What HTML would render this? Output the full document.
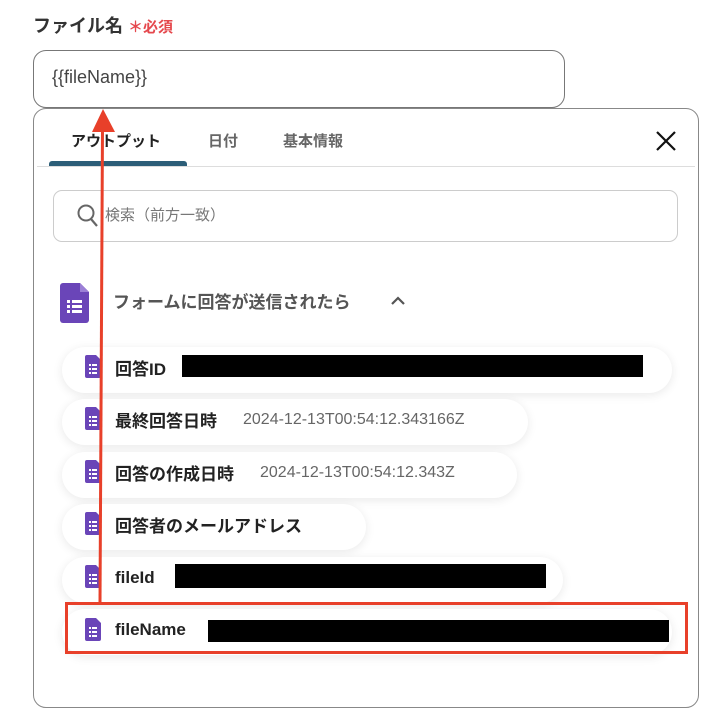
<!DOCTYPE html>
<html><head><meta charset="utf-8"><style>
*{box-sizing:border-box;margin:0;padding:0}
body{width:704px;height:662px;overflow:hidden;background:#fff;font-family:"Liberation Sans","Noto Sans CJK JP",sans-serif;position:relative;color:#222}
.abs{position:absolute}
.lbl{left:33px;top:12px;font-size:18px;font-weight:bold;color:#333}
.lbl span{color:#e5484d;font-size:15px}
.inp{left:33px;top:50px;width:532px;height:58px;border:1px solid #777;border-radius:13px;font-size:18px;padding:16px 0 0 18px;color:#444}
.panel{left:33px;top:108px;width:666px;height:600px;border:1px solid #888;border-radius:13px;background:#fff}
.tab{top:130px;font-size:15px;font-weight:bold;color:#666}
.pill{left:62px;height:46px;border-radius:23px;background:#fff;box-shadow:0 2px 10px rgba(0,0,0,.09);font-size:17px;font-weight:bold;color:#222;display:flex;align-items:center;padding-left:53px;padding-bottom:5px;white-space:nowrap}
.pill .v{font-weight:normal;color:#666;font-size:16px;margin-left:26px}
.bar{background:#000;position:absolute}
</style></head><body>
<div class="abs lbl">ファイル名 <span>＊必須</span></div>
<div class="abs inp">{{fileName}}</div>
<div class="abs panel"></div>
<div class="abs tab" style="left:71px;color:#222">アウトプット</div>
<div class="abs tab" style="left:208px">日付</div>
<div class="abs tab" style="left:283px">基本情報</div>
<div class="abs" style="left:49px;top:161px;width:138px;height:5px;background:#2c5e78;border-radius:3px 3px 0 0"></div>
<div class="abs" style="left:37px;top:166px;width:658px;height:1px;background:#ddd"></div>
<svg class="abs" style="left:655px;top:130px" width="22" height="22"><path d="M2 2L20 20M20 2L2 20" stroke="#111" stroke-width="2.2"/></svg>
<div class="abs" style="left:53px;top:190px;width:625px;height:52px;border:1px solid #ccc;border-radius:9px"></div>
<svg class="abs" style="left:77px;top:204px" width="22" height="24"><circle cx="9" cy="9" r="7.5" fill="none" stroke="#666" stroke-width="2"/><path d="M14 15L20 22" stroke="#666" stroke-width="2.2"/></svg>
<div class="abs" style="left:105px;top:204px;font-size:15px;color:#777">検索（前方一致）</div>
<svg class="abs" style="left:60px;top:283px" width="29" height="40"><path d="M3 0H20L29 9V37a3 3 0 0 1-3 3H3a3 3 0 0 1-3-3V3a3 3 0 0 1 3-3z" fill="#6a45b8"/><path d="M20 0V9H29z" fill="#9b7fd6"/><g fill="#fff"><rect x="7" y="17" width="3" height="3"/><rect x="12" y="17" width="10" height="3"/><rect x="7" y="22" width="3" height="3"/><rect x="12" y="22" width="10" height="3"/><rect x="7" y="27" width="3" height="3"/><rect x="12" y="27" width="10" height="3"/></g></svg>
<div class="abs" style="left:113px;top:288px;font-size:17px;font-weight:bold;color:#555">フォームに回答が送信されたら</div>
<svg class="abs" style="left:390px;top:295px" width="16" height="12"><path d="M2 9L8 3L14 9" fill="none" stroke="#555" stroke-width="2.2"/></svg>

<div class="abs pill" style="top:347px;width:610px">回答ID</div>
<div class="bar" style="left:182px;top:355px;width:461px;height:22px"></div>
<div class="abs pill" style="top:399px;width:466px">最終回答日時<span class="v">2024-12-13T00:54:12.343166Z</span></div>
<div class="abs pill" style="top:452px;width:455px">回答の作成日時<span class="v">2024-12-13T00:54:12.343Z</span></div>
<div class="abs pill" style="top:504px;width:304px">回答者のメールアドレス</div>
<div class="abs pill" style="top:557px;width:501px">fileId</div>
<div class="bar" style="left:175px;top:564px;width:371px;height:24px"></div>
<div class="abs pill" style="top:609px;width:610px">fileName</div>
<div class="bar" style="left:208px;top:620px;width:461px;height:22px"></div>

<svg class="abs" style="left:0;top:0" width="704" height="662">
<defs><g id="fi"><path d="M2 0H11L16 5V21a2 2 0 0 1-2 2H2a2 2 0 0 1-2-2V2a2 2 0 0 1 2-2z" fill="#6a45b8"/><g fill="#fff"><rect x="4" y="9" width="2" height="2"/><rect x="7" y="9" width="5" height="2"/><rect x="4" y="13" width="2" height="2"/><rect x="7" y="13" width="5" height="2"/><rect x="4" y="17" width="2" height="2"/><rect x="7" y="17" width="5" height="2"/></g></g></defs>
<use href="#fi" x="85" y="355"/><use href="#fi" x="85" y="407"/><use href="#fi" x="85" y="460"/><use href="#fi" x="85" y="512"/><use href="#fi" x="85" y="565"/><use href="#fi" x="85" y="618"/>
<rect x="66.5" y="603.5" width="620" height="49" fill="none" stroke="#e8402a" stroke-width="3"/>
<path d="M100 603L102.5 128" stroke="#e8402a" stroke-width="3"/>
<path d="M103 109L92 132L115 132Z" fill="#e8402a"/>
</svg>
</body></html>
